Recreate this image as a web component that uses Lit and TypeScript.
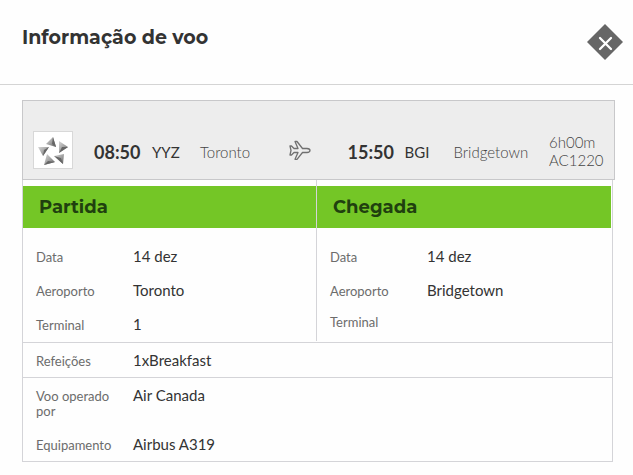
import { LitElement, html, css } from "lit";
import { customElement, property } from "lit/decorators.js";

type Field = [label: string, value: string];

const departure: Field[] = [["Data", "14 dez"], ["Aeroporto", "Toronto"], ["Terminal", "1"]];
const arrival: Field[] = [["Data", "14 dez"], ["Aeroporto", "Bridgetown"], ["Terminal", ""]];
const meals: Field[] = [["Refeições", "1xBreakfast"]];
const operation: Field[] = [["Voo operado por", "Air Canada"], ["Equipamento", "Airbus A319"]];

@customElement("flight-fields")
export class FlightFields extends LitElement {
  @property({ attribute: false }) fields: Field[] = [];

  static styles = css`
    :host { display: block; }
    .list { margin: 0; }
    .row {
      display: grid;
      grid-template-columns: 82px 1fr;
      column-gap: 15px;
      align-items: baseline;
      min-height: 18px;
      padding: 8px 13px;
    }
    .label { font-size: 13px; line-height: 15px; color: #6c6c6c; }
    .value { margin: 0; font-size: 15px; line-height: 18px; color: #333; }
  `;

  render() {
    return html`<dl class="list">
      ${this.fields.map(([label, value]) => html`
        <div class="row"><dt class="label">${label}</dt><dd class="value">${value}</dd></div>`)}
    </dl>`;
  }
}

@customElement("flight-summary")
export class FlightSummary extends LitElement {
  static styles = css`
    :host { display: block; }
    .bar {
      display: grid;
      grid-template-columns: 61px 58px 48px 89fr 59px 57px 49px 96fr 55px;
      align-items: center;
      padding: 30px 10px 10px;
      background: #ededed;
      border: 1px solid #c8c8ca;
      white-space: nowrap;
    }
    .logo {
      box-sizing: border-box;
      width: 40px;
      height: 38px;
      background: #fff;
      border: 1px solid #d8d8d8;
    }
    .logo svg, .plane { display: block; }
    .time, .code, .city { padding-top: 4px; }
    .time { font-size: 18px; line-height: 18px; font-weight: 700; color: #333; }
    .code { font-size: 15px; line-height: 18px; color: #333; }
    .city, .meta { font-size: 15px; line-height: 18px; font-weight: 300; color: #444; }
    .meta { padding-top: 2px; }
  `;

  render() {
    return html`<div class="bar">
      <div class="logo">
        <svg width="38" height="36" viewBox="0 0 38 36" role="img" aria-label="Star Alliance">
          <defs>
            <linearGradient id="metal" x1="0" y1="0" x2="1" y2="1">
              <stop offset="0" stop-color="#d8d8d8"/><stop offset=".5" stop-color="#a4a4a4"/><stop offset="1" stop-color="#606060"/>
            </linearGradient>
          </defs>
          <g fill="url(#metal)">
            <path d="M19 5l3 10-10-3z"/><path d="M25 9l9 6-9 6z"/><path d="M20 24l10-2-1 10z"/>
            <path d="M13 22l8 8-11 3z"/><path d="M4 15l11 0-6 9z"/>
          </g>
          <g fill="#666">
            <path d="M19 5l3 10-4-3z"/><path d="M34 15l-9 6 3-6z"/><path d="M29 32l-9-8 7 2z"/>
            <path d="M10 33l11-3-7-1z"/><path d="M9 24l6-9-5 3z"/>
          </g>
        </svg>
      </div>
      <div class="time">08:50</div>
      <div class="code">YYZ</div>
      <div class="city">Toronto</div>
      <svg class="plane" width="22" height="20" viewBox="0 0 22 20" fill="none" stroke="#707070" stroke-width="1.3" stroke-linejoin="round" aria-hidden="true">
        <path d="M1 6H2.500L5 8.500H9L6 1.500H8L13.500 8.500H18Q21 8.700 21 10.500Q21 12.300 18 12.500H13.500L8 19.300H6L9 12.500H5L2.500 15H1L2 10.500Z"/>
      </svg>
      <div class="time">15:50</div>
      <div class="code">BGI</div>
      <div class="city">Bridgetown</div>
      <div class="meta">6h00m<br>AC1220</div>
    </div>`;
  }
}

@customElement("app-root")
export class AppRoot extends LitElement {
  static styles = css`
    :host {
      display: block;
      min-height: 100vh;
      background: #fefefe;
      font-family: Lato, "Liberation Sans", sans-serif;
    }
    .header {
      display: flex;
      align-items: center;
      justify-content: space-between;
      height: 84px;
      padding: 0 10px 0 22px;
      border-bottom: 1px solid #d4d4d4;
    }
    .title, .heading { margin: 0; font-family: Montserrat, Inter, sans-serif; font-weight: 700; }
    .title { padding-bottom: 8px; font-size: 19px; line-height: 24px; color: #333; }
    .close { width: 36px; height: 36px; padding: 0; border: 0; background: none; cursor: pointer; }
    .close svg { display: block; }
    .content { padding: 15px 18px 14px 22px; }
    .details { margin-right: 2px; border: 1px solid #d4d4d8; border-top: 0; }
    .legs { display: grid; grid-template-columns: 293fr 295fr; padding: 0 1px 1px 0; }
    .leg { padding-top: 6px; }
    .leg + .leg { border-left: 1px solid #d4d4d8; }
    .heading {
      margin-bottom: 11px;
      padding: 9px 16px;
      background: #74c626;
      color: #20400f;
      font-size: 18px;
      line-height: 24px;
    }
    .section { border-top: 1px solid #d4d4d8; }
  `;

  render() {
    return html`
      <header class="header">
        <h1 class="title">Informação de voo</h1>
        <button class="close" type="button" aria-label="Fechar">
          <svg width="36" height="36" viewBox="0 0 36 36" aria-hidden="true">
            <path d="M18 0L36 18L18 36L0 18Z" fill="#666"/>
            <path d="M13 14L24 25M24 14L13 25" stroke="#fff" stroke-width="2.300" stroke-linecap="round"/>
          </svg>
        </button>
      </header>
      <main class="content">
        <flight-summary></flight-summary>
        <div class="details">
          <div class="legs">
            <section class="leg"><h2 class="heading">Partida</h2><flight-fields .fields=${departure}></flight-fields></section>
            <section class="leg"><h2 class="heading">Chegada</h2><flight-fields .fields=${arrival}></flight-fields></section>
          </div>
          <flight-fields class="section" .fields=${meals}></flight-fields>
          <flight-fields class="section" .fields=${operation}></flight-fields>
        </div>
      </main>`;
  }
}
